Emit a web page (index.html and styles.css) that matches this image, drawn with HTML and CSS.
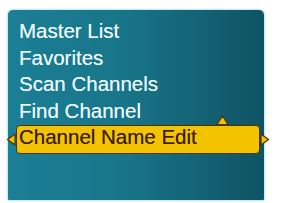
FILE: index.html
```html
<!DOCTYPE html>
<html lang="en">
<head>
  <meta charset="UTF-8">
  <title>Channel Menu</title>
  <link rel="stylesheet" href="styles.css">
</head>
<body>
  <div class="screen">
    <div class="menu-panel">
      <ul class="menu-list">
        <li>Master List</li>
        <li>Favorites</li>
        <li>Scan Channels</li>
        <li>Find Channel</li>
        <li class="selected">
          Channel Name Edit
          <svg class="arrow arrow-left" width="10" height="13" viewBox="0 0 10 13"><path d="M9 1 L1.5 6.5 L9 12 Z" fill="#f2c200" stroke="#4a3000" stroke-width="1.2" stroke-linejoin="round"/></svg>
          <svg class="arrow arrow-right" width="10" height="13" viewBox="0 0 10 13"><path d="M1 1 L8.5 6.5 L1 12 Z" fill="#f2c200" stroke="#4a3000" stroke-width="1.2" stroke-linejoin="round"/></svg>
          <svg class="arrow arrow-up" width="13" height="11" viewBox="0 0 13 11"><path d="M1 10.5 L6.5 2 L12 10.5 Z" fill="#f2c200" stroke="#4a3000" stroke-width="1.2" stroke-linejoin="round"/></svg>
        </li>
      </ul>
    </div>
  </div>
</body>
</html>
```

FILE: styles.css
```css
body {
  margin: 0;
  background: #ffffff;
  font-family: 'Liberation Sans', Arial, sans-serif;
}

.screen {
  width: 285px;
  height: 203px;
  padding: 9px 0 0 7px;
  box-sizing: border-box;
}

.menu-panel {
  width: 258px;
  height: 192px;
  box-sizing: border-box;
  border: 1px solid #c6ecf2;
  border-radius: 6px 6px 2px 2px;
  background: linear-gradient(to right, #1b7f95 0%, #187589 45%, #135f72 80%, #0e5363 100%);
  box-shadow: 0 0 2px rgba(170, 230, 240, 0.8);
  padding: 8px 0 0 11px;
}

.menu-list {
  list-style: none;
  margin: 0;
  padding: 0;
  font-size: 20.5px;
  line-height: 26.5px;
  color: #f0fbff;
  text-shadow: 0 0 0.6px rgba(240, 251, 255, 0.7);
}

.menu-list .selected {
  position: relative;
  margin: 1px 4px 0 -3px;
  padding: 0 2px 5px 2px;
  line-height: 22px;
  color: #3b1d00;
  text-shadow: 0 0 0.6px rgba(59, 29, 0, 0.7);
  background: #f4c300;
  border: 1.5px solid #4d3200;
  border-radius: 4px;
}

.arrow {
  position: absolute;
  display: block;
}

.arrow-left {
  left: -11px;
  top: 7px;
}

.arrow-right {
  right: -11px;
  top: 7px;
}

.arrow-up {
  left: 199px;
  top: -12px;
}
```
